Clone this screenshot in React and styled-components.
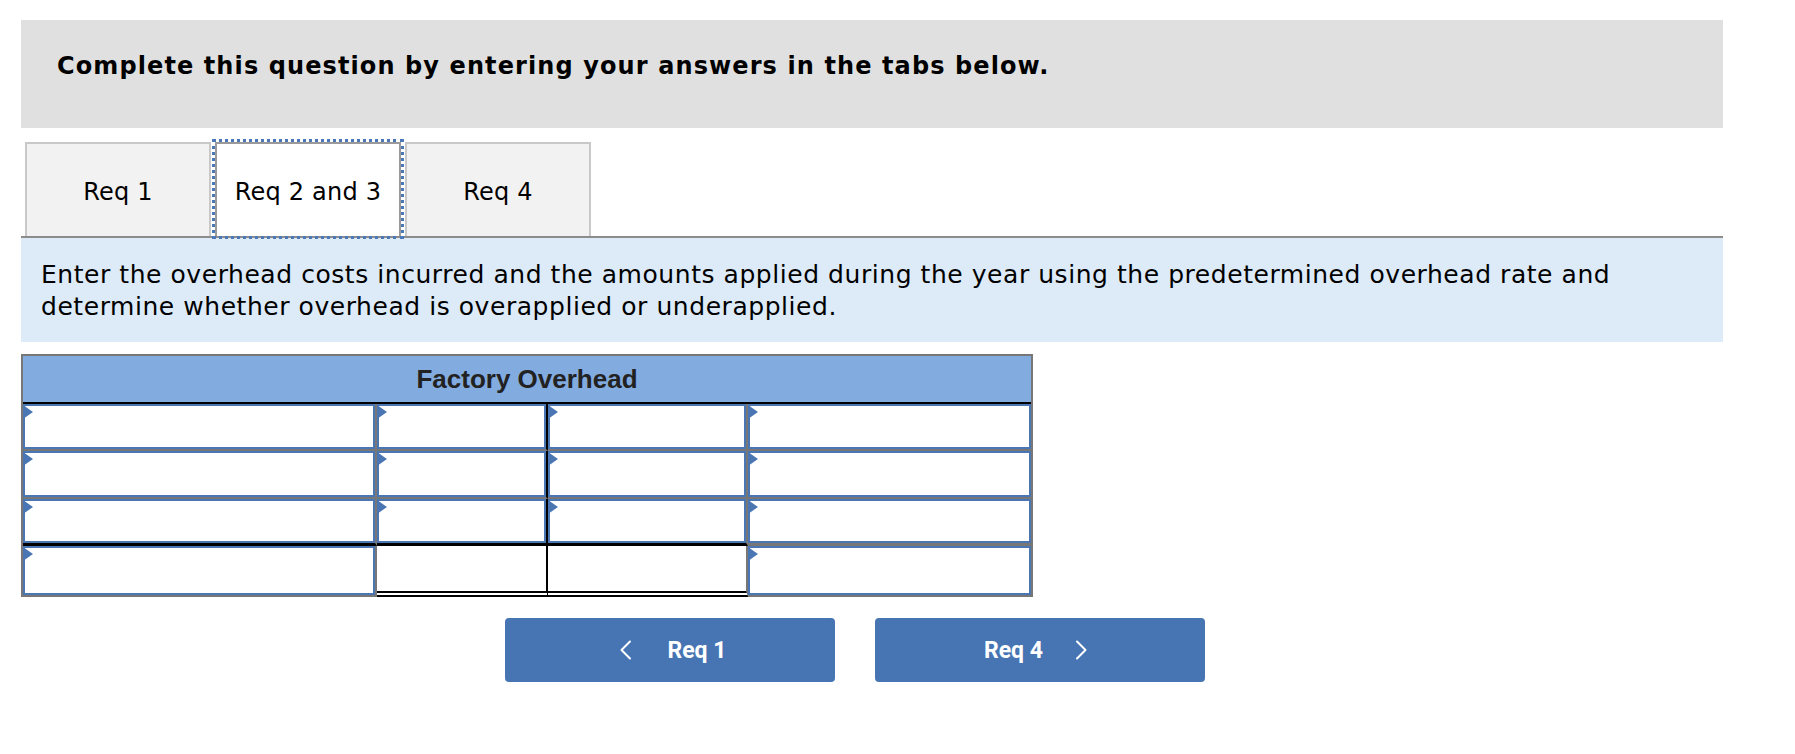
import React from "react";
import styled, { createGlobalStyle } from "styled-components";

const Global = createGlobalStyle`
  html, body { margin: 0; padding: 0; background: #fff; }
  body { font-family: "DejaVu Sans", Verdana, sans-serif; color: #000; }
  * { box-sizing: border-box; }
`;

const Page = styled.div`
  padding: 20px 0 0 21px;
  width: 1723px;
`;

const Banner = styled.div`
  background: #e0e0e0;
  height: 108px;
  padding: 29px 0 0 36px;
  font-family: "DejaVu Sans", Verdana, sans-serif;
  font-weight: 700;
  font-size: 24px;
  letter-spacing: 1.1px;
  line-height: 34px;
  color: #000;
`;

const TabRow = styled.div`
  display: flex;
  gap: 4px;
  margin: 14px 0 0 4px;
  height: 94px;
`;

const Tab = styled.button`
  width: ${(p) => p.$w}px;
  height: 94px;
  border: 2px solid ${(p) => (p.$active ? "#9a9a9a" : "#c8c8c8")};
  border-bottom: none;
  background: ${(p) => (p.$active ? "#ffffff" : "#f2f2f2")};
  font-family: "DejaVu Sans", Verdana, sans-serif;
  font-size: 24px;
  letter-spacing: 0.2px;
  color: #000;
  padding: 4px 0 0 0;
  cursor: pointer;
  outline: ${(p) => (p.$active ? "3px dotted #4a78b8" : "none")};
  outline-offset: 0;
  position: relative;
  z-index: ${(p) => (p.$active ? 2 : 1)};
`;

const Instructions = styled.div`
  border-top: 2px solid #8c8c8c;
  background: #ddebf8;
  padding: 21px 20px 18px 20px;
  font-size: 25px;
  letter-spacing: 0.55px;
  line-height: 32px;
  color: #000;
  height: 106px;
`;

const Sheet = styled.div`
  margin-top: 12px;
  width: 1012px;
  border: 2px solid #777;
  border-bottom: none;
  display: grid;
  grid-template-columns: 354px 171px 200px 283px;
  grid-template-rows: 48px 47px 48px 47px 51px;
`;

const SheetHeader = styled.div`
  grid-column: 1 / -1;
  background: #82abe0;
  border-bottom: 2px solid #000;
  font-family: "Liberation Sans", Arial, sans-serif;
  font-weight: 700;
  font-size: 26px;
  line-height: 46px;
  text-align: center;
  color: #222;
`;

const Cell = styled.div`
  position: relative;
  display: flex;
  border-right: ${(p) => (p.$right ? `2px solid ${p.$right}` : "none")};
  border-bottom: ${(p) => p.$bottom || "none"};
`;

const Entry = styled.input`
  flex: 1;
  min-width: 0;
  border: 2px solid #4a76b4;
  background: #fff;
  margin: 0;
  padding: 0 8px;
  font-family: "Liberation Sans", Arial, sans-serif;
  font-size: 18px;
  outline: none;
`;

const Flag = styled.span`
  position: absolute;
  top: 1px;
  left: 0;
  width: 0;
  height: 0;
  border-left: 10px solid #4a76b4;
  border-top: 7px solid transparent;
  border-bottom: 7px solid transparent;
  pointer-events: none;
`;

const NavRow = styled.div`
  display: flex;
  gap: 40px;
  margin: 21px 0 0 484px;
`;

const NavButton = styled.button`
  width: 330px;
  height: 64px;
  border: none;
  border-radius: 4px;
  background: #4775b4;
  color: #fff;
  font-family: Roboto, "Liberation Sans", sans-serif;
  font-weight: 700;
  font-size: 23px;
  display: flex;
  align-items: center;
  justify-content: center;
  gap: ${(p) => p.$gap}px;
  cursor: pointer;
  padding: 0 ${(p) => (p.$shift < 0 ? -p.$shift * 2 : 0)}px 0 ${(p) => (p.$shift > 0 ? p.$shift * 2 : 0)}px;
`;

const Chevron = ({ dir }) => (
  <svg width="13" height="20" viewBox="0 0 13 20" aria-hidden="true">
    <polyline
      points={dir === "left" ? "11,1.5 2.5,10 11,18.5" : "2,1.5 10.5,10 2,18.5"}
      fill="none"
      stroke="#fff"
      strokeWidth="2"
      strokeLinecap="round"
      strokeLinejoin="round"
    />
  </svg>
);

const GRAY = "#777";
const BLACK = "#000";

const rows = [
  { mid: `2px solid ${GRAY}` },
  { mid: `2px solid ${GRAY}` },
  { mid: `3px solid ${BLACK}`, last: `3px solid ${GRAY}` },
];

function InputCell({ right, bottom }) {
  return (
    <Cell $right={right} $bottom={bottom}>
      <Entry type="text" aria-label="entry" />
      <Flag />
    </Cell>
  );
}

export default function App() {
  return (
    <>
      <Global />
      <Page>
        <Banner>Complete this question by entering your answers in the tabs below.</Banner>
        <TabRow>
          <Tab $w={186}>Req 1</Tab>
          <Tab $w={186} $active>Req 2 and 3</Tab>
          <Tab $w={186}>Req 4</Tab>
        </TabRow>
        <Instructions>
          Enter the overhead costs incurred and the amounts applied during the year using the predetermined overhead rate and
          <br />
          determine whether overhead is overapplied or underapplied.
        </Instructions>
        <Sheet>
          <SheetHeader>Factory Overhead</SheetHeader>
          {rows.map((r, i) => (
            <React.Fragment key={i}>
              <InputCell right={GRAY} bottom={r.mid} />
              <InputCell right={BLACK} bottom={r.mid} />
              <InputCell right={GRAY} bottom={r.mid} />
              <InputCell bottom={r.last || r.mid} />
            </React.Fragment>
          ))}
          <InputCell right={GRAY} bottom={`2px solid ${GRAY}`} />
          <Cell $right={BLACK} $bottom="6px double #000" />
          <Cell $right={GRAY} $bottom="6px double #000" />
          <InputCell bottom={`2px solid ${GRAY}`} />
        </Sheet>
        <NavRow>
          <NavButton $gap={35} $shift={3}>
            <Chevron dir="left" />
            <span>Req 1</span>
          </NavButton>
          <NavButton $gap={32} $shift={-4}>
            <span>Req 4</span>
            <Chevron dir="right" />
          </NavButton>
        </NavRow>
      </Page>
    </>
  );
}
